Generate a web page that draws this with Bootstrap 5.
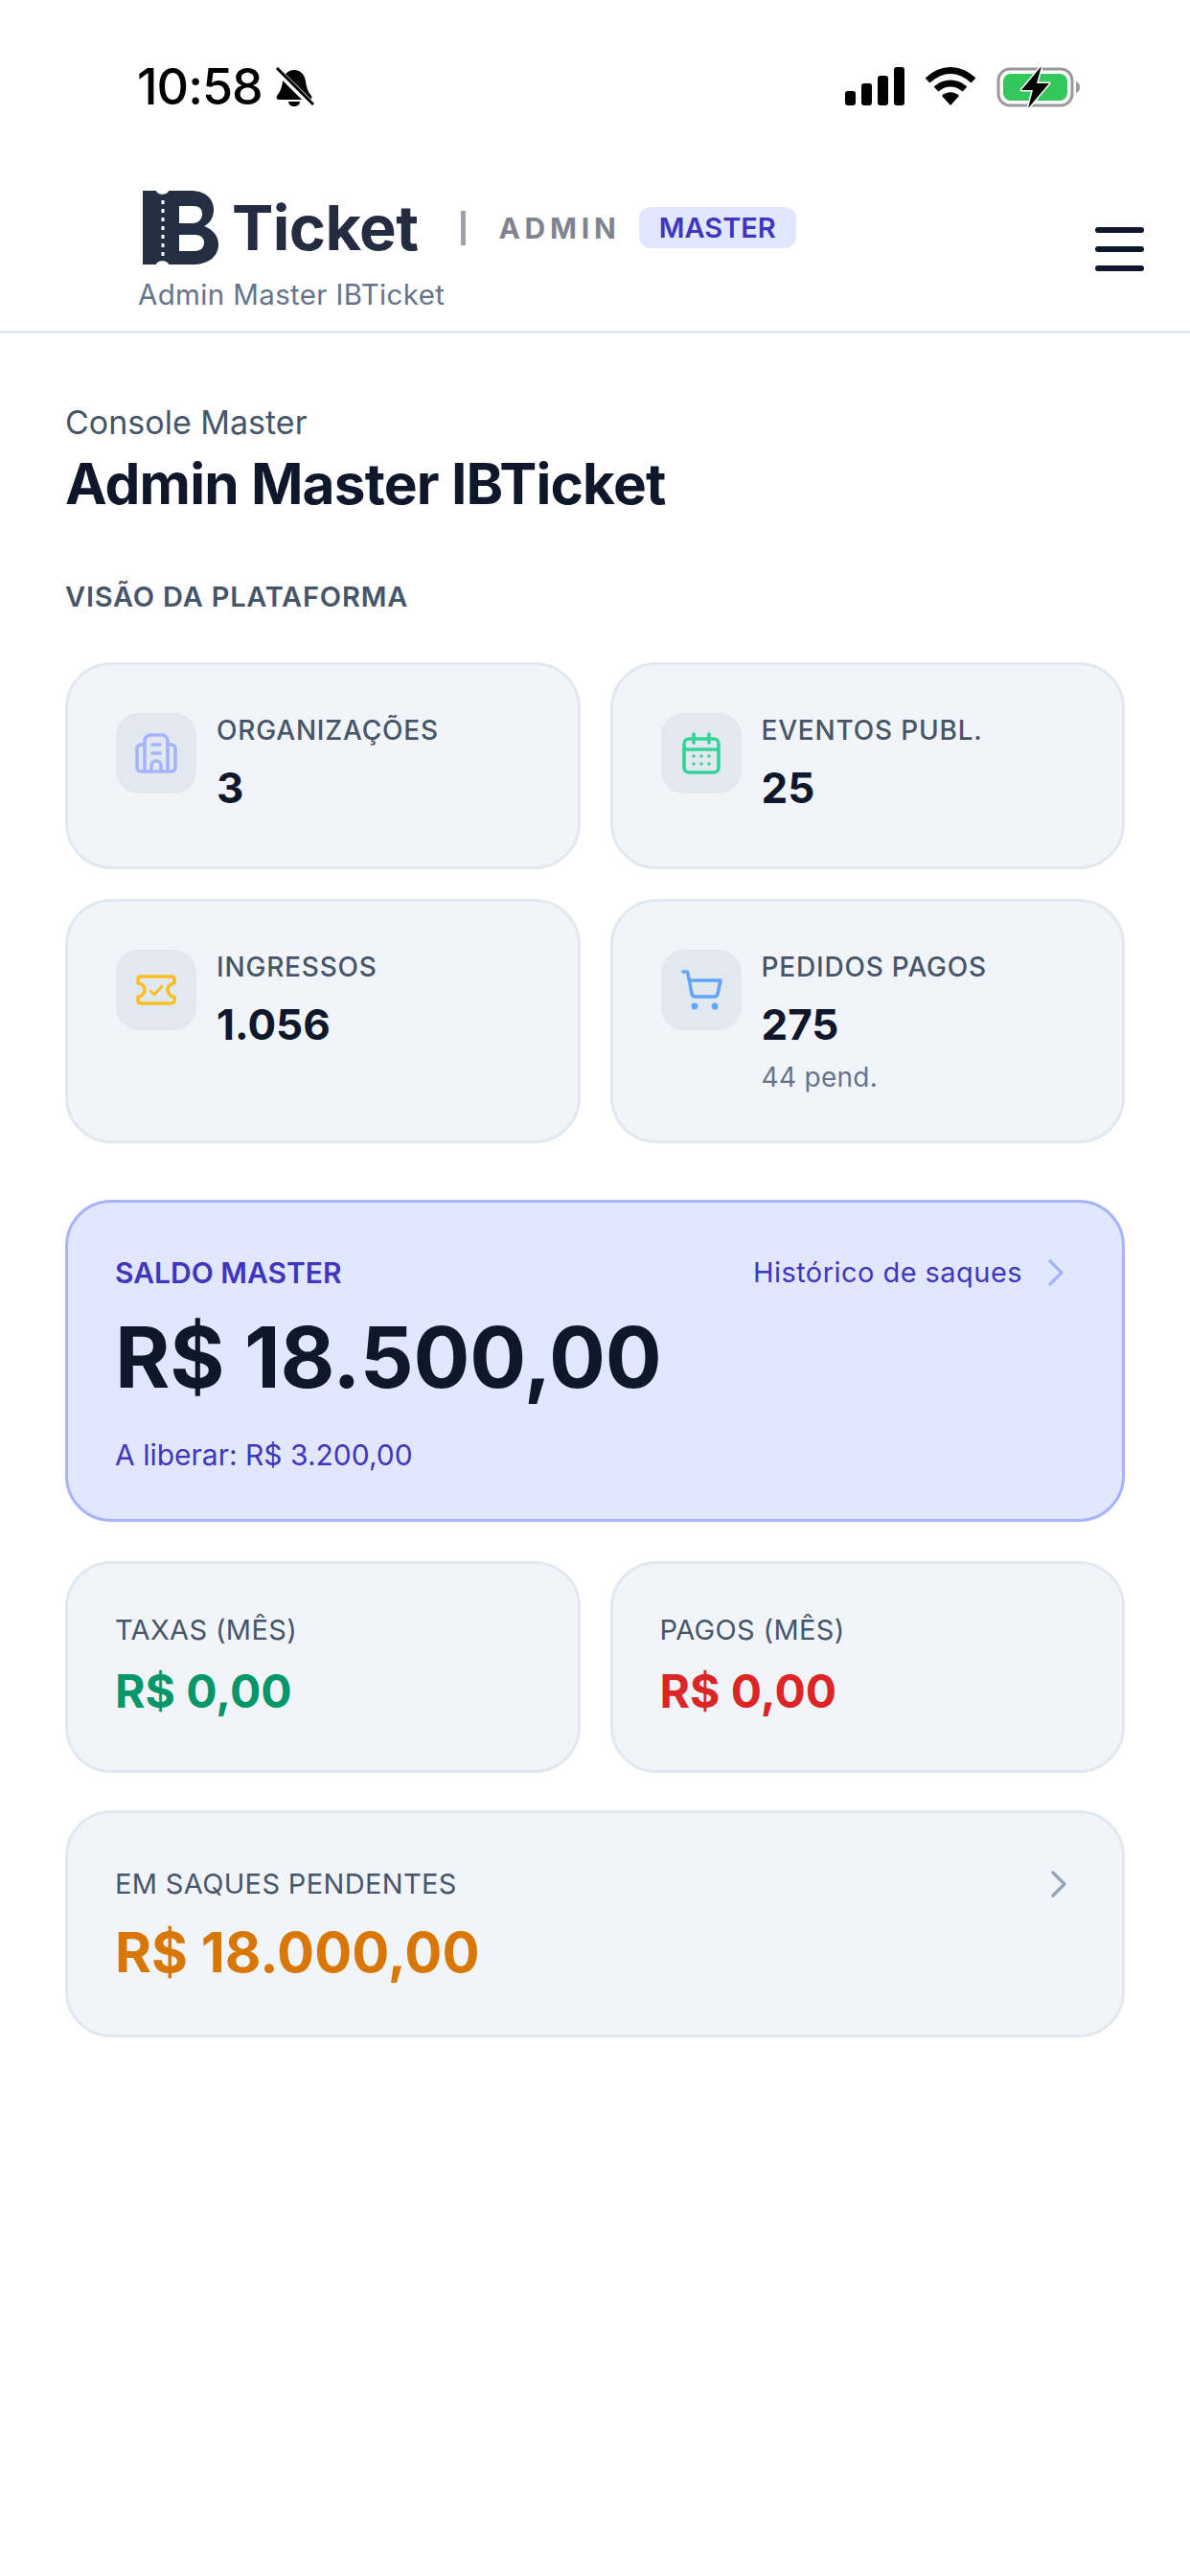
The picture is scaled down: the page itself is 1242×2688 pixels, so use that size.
<!DOCTYPE html>
<html lang="pt-BR">

<head>
  <meta charset="UTF-8">
  <title>Admin Master IBTicket</title>
  <link href="https://cdn.jsdelivr.net/npm/bootstrap@5.3.0/dist/css/bootstrap.min.css" rel="stylesheet">
  <style>
    body { font-family: Inter, "Liberation Sans", sans-serif; background: #fff; color: #0f172a; }
    svg { display: block; flex-shrink: 0; }

    /* status bar */
    .status-row { height: 160px; padding: 62px 114px 0 143px; align-items: flex-start; }
    .status-time { font-size: 52px; line-height: 58px; font-weight: 500; color: #000; letter-spacing: -1px; margin-right: 12px; }
    .status-icons { gap: 21px; }

    /* header */
    .app-header { height: 188px; border-bottom: 3px solid #e2e8f0; padding: 39px 48px 0 145px; }
    .brand-word { font-size: 65px; line-height: 77px; font-weight: 700; color: #232c40; letter-spacing: -.6px; margin-left: 14px; }
    .brand-sep { width: 5px; height: 36px; background: #9ca3af; margin: 0 34px 0 45px; }
    .brand-admin { font-size: 30px; line-height: 36px; font-weight: 700; color: #7f8590; letter-spacing: 4.8px; margin-right: 19px; }
    .brand-tag { font-size: 29px; line-height: 43px; font-weight: 600; color: #3f36bd; background: #e0e7ff; border-radius: 12px; padding: 0 21px; }
    .brand-sub { font-size: 29.5px; line-height: 36px; color: #64748b; letter-spacing: .35px; margin-top: 13px; margin-left: -1px; }
    .brand-logo { margin-left: 4px; }
    .menu-btn { width: 51px; margin-top: 38px; }
    .menu-btn span { display: block; height: 6px; border-radius: 3px; background: #0f172a; margin-bottom: 14px; }

    /* content */
    .page-main { padding: 71px 68px 0; }
    .page-kicker { font-size: 34px; line-height: 44px; color: #475569; }
    .page-title { font-size: 58.5px; line-height: 70px; font-weight: 700; color: #0f172a; letter-spacing: -.8px; margin: 7px 0 0; }
    .section-label { font-size: 29px; line-height: 36px; font-weight: 600; color: #475569; letter-spacing: .8px; margin: 65px 0 50px; }

    .tile-row { --bs-gutter-x: 31px; --bs-gutter-y: 31px; }
    .tile-row-next { padding-top: 10px; }
    .tile { background: #f1f5f9; border: 3px solid #e2e8f0; border-radius: 48px; }
    .tile-body { padding: 50px 40px 50px 50px; gap: 21px; }
    .tile-icon { width: 84px; height: 84px; border-radius: 24px; background: #e2e8f0; }
    .tile-label { font-size: 28px; line-height: 36px; font-weight: 500; color: #475569; letter-spacing: .8px; }
    .tile-value { font-size: 44px; line-height: 64px; font-weight: 700; color: #0f172a; margin-top: 10px; }
    .tile-note { font-size: 28px; line-height: 32px; color: #64748b; padding-top: 7px; letter-spacing: .3px; }

    .balance-tile { background: #e0e7ff; border: 3px solid #a5b4fc; border-radius: 48px; margin-top: 59px; padding: 51px 60px 50px 49px; height: 336px; color: #3f36bd; }
    .balance-label { font-size: 30px; line-height: 44px; font-weight: 600; }
    .balance-link { font-size: 29px; line-height: 44px; letter-spacing: .45px; gap: 26px; }
    .balance-value { font-size: 87.5px; line-height: 104px; font-weight: 700; color: #0f172a; letter-spacing: -.2px; margin-top: 14px; }
    .balance-note { font-size: 30px; line-height: 40px; margin-top: 30px; }

    .money-body { padding: 49px 49px 0; }
    .money-label { font-size: 29px; line-height: 40px; color: #475569; letter-spacing: .35px; }
    .money-value { font-size: 48px; line-height: 64px; font-weight: 700; margin-top: 12px; }
    .money-value-lg { font-size: 58px; line-height: 72px; font-weight: 700; color: #d97706; margin-top: 15px; }
    .money-green { color: #059669; }
    .money-red { color: #dc2626; }
    .money-tile { height: 221px; }
    .pending-tile { height: 237px; margin-top: 39px; padding-top: 54px; }
  </style>
</head>

<body>
  <div class="d-flex status-row">
    <span class="status-time">10:58</span>
    <svg width="42" height="42" viewBox="0 0 42 42" class="mt-2">
      <path d="M21 3c7 0 11 5 12 12 1 6 2 10 6 15 1 2 0 4-2 4H5c-2 0-3-2-2-4 4-5 5-9 6-15 1-7 5-12 12-12z" fill="#000"/>
      <path d="M15 36h12c0 3-3 5-6 5s-6-2-6-5z" fill="#000"/>
      <path d="M2 2l38 38" stroke="#fff" stroke-width="7"/>
      <path d="M3 1l38 38" stroke="#000" stroke-width="3"/>
    </svg>
    <div class="ms-auto d-flex align-items-start status-icons">
      <svg width="62" height="40" viewBox="0 0 62 40" class="mt-2">
        <rect x="0" y="25" width="11" height="15" rx="3"/>
        <rect x="17" y="17" width="11" height="23" rx="3"/>
        <rect x="34" y="9" width="11" height="31" rx="3"/>
        <rect x="51" y="0" width="11" height="40" rx="3"/>
      </svg>
      <svg width="54" height="40" viewBox="0 0 54 40" class="mt-2">
        <path d="M3 14C18 0 36 0 51 14" fill="none" stroke="#000" stroke-width="7"/>
        <path d="M12 23c9-8 21-8 30 0" fill="none" stroke="#000" stroke-width="7"/>
        <path d="M18 30c5-5 13-5 18 0l-9 10z" fill="#000"/>
      </svg>
      <svg width="88" height="42" viewBox="0 0 88 42" class="mt-2">
        <rect x="2" y="2" width="77" height="38" rx="12" fill="none" stroke="#9a9a9a" stroke-width="3"/>
        <rect x="7" y="7" width="67" height="28" rx="8" fill="#34c759"/>
        <path d="M83 15c3 1 4 3 4 6s-1 5-4 6z" fill="#9a9a9a"/>
        <path d="M47 -1L26 24h12l-5 19 22-26H42z" fill="#000" stroke="#fff" stroke-width="3" stroke-linejoin="round" paint-order="stroke"/>
      </svg>
    </div>
  </div>

  <header class="app-header d-flex justify-content-between align-items-start">
    <div>
      <div class="d-flex align-items-center">
        <svg class="brand-logo" width="79" height="77" viewBox="0 0 79 77">
          <path fill="#252f44" fill-rule="evenodd" d="M0 0H14C15 5 26 5 27 0H50C66 0 74 9 74 20C74 28 70 34 64 37C72 40 79 46 79 56C79 69 68 77 52 77H27C26 72 15 72 14 77H0ZM38 16V34H52C58 34 62 30 62 24C62 19 59 16 53 16ZM38 46V63H54C60 63 64 60 64 54C64 50 61 46 55 46Z"/>
          <path d="M21 10V68" stroke="#fff" stroke-width="3" stroke-dasharray="4 5"/>
        </svg>
        <span class="brand-word">Ticket</span>
        <span class="brand-sep"></span>
        <span class="brand-admin">ADMIN</span>
        <span class="brand-tag">MASTER</span>
      </div>
      <div class="brand-sub">Admin Master IBTicket</div>
    </div>
    <div class="menu-btn"><span></span><span></span><span></span></div>
  </header>

  <main class="page-main">
    <div class="page-kicker">Console Master</div>
    <h1 class="page-title">Admin Master IBTicket</h1>
    <div class="section-label">VISÃO DA PLATAFORMA</div>

    <div class="row tile-row">
      <div class="col-6">
        <div class="tile h-100">
          <div class="tile-body d-flex align-items-start">
            <div class="tile-icon d-flex align-items-center justify-content-center">
              <svg width="48" height="48" viewBox="0 0 48 48" fill="none" stroke="#a5b4fc" stroke-width="3.6" stroke-linecap="round" stroke-linejoin="round">
                <path d="M12 43V11a6 6 0 0 1 6-6h12a6 6 0 0 1 6 6v32"/>
                <path d="M12 15H8a4 4 0 0 0-4 4v20a4 4 0 0 0 4 4h32a4 4 0 0 0 4-4V19a4 4 0 0 0-4-4h-4"/>
                <path d="M19 43v-6a5 5 0 0 1 10 0v6"/>
                <path d="M20 15h8M20 24h8"/>
              </svg>
            </div>
            <div>
              <div class="tile-label">ORGANIZAÇÕES</div>
              <div class="tile-value">3</div>
            </div>
          </div>
        </div>
      </div>
      <div class="col-6">
        <div class="tile h-100">
          <div class="tile-body d-flex align-items-start">
            <div class="tile-icon d-flex align-items-center justify-content-center">
              <svg width="48" height="48" viewBox="0 0 48 48" fill="none" stroke="#34d399" stroke-width="3.6" stroke-linecap="round" stroke-linejoin="round">
                <rect x="6" y="9" width="36" height="35" rx="5"/>
                <path d="M6 20h36M16 4v9M32 4v9"/>
                <g fill="#34d399" stroke="none">
                  <circle cx="16" cy="27" r="1.7"/><circle cx="24" cy="27" r="1.7"/><circle cx="32" cy="27" r="1.7"/>
                  <circle cx="16" cy="35" r="1.7"/><circle cx="24" cy="35" r="1.7"/><circle cx="32" cy="35" r="1.7"/>
                </g>
              </svg>
            </div>
            <div>
              <div class="tile-label">EVENTOS PUBL.</div>
              <div class="tile-value">25</div>
            </div>
          </div>
        </div>
      </div>
      <div class="col-6">
        <div class="tile h-100">
          <div class="tile-body d-flex align-items-start">
            <div class="tile-icon d-flex align-items-center justify-content-center">
              <svg width="48" height="48" viewBox="0 0 48 48" fill="none" stroke="#fbbf24" stroke-width="3.6" stroke-linecap="round" stroke-linejoin="round">
                <path d="M8 10h32a3 3 0 0 1 3 3v4a7 7 0 0 0 0 14v4a3 3 0 0 1-3 3H8a3 3 0 0 1-3-3v-4a7 7 0 0 0 0-14v-4a3 3 0 0 1 3-3z"/>
                <path d="M18 25l4 4 8-9" stroke-width="2.8"/>
              </svg>
            </div>
            <div>
              <div class="tile-label">INGRESSOS</div>
              <div class="tile-value">1.056</div>
            </div>
          </div>
        </div>
      </div>
      <div class="col-6">
        <div class="tile h-100">
          <div class="tile-body d-flex align-items-start">
            <div class="tile-icon d-flex align-items-center justify-content-center">
              <svg width="48" height="48" viewBox="0 0 48 48" fill="none" stroke="#60a5fa" stroke-width="3.6" stroke-linecap="round" stroke-linejoin="round">
                <path d="M5 5h3a2 2 0 0 1 2 2l4 21a4 4 0 0 0 4 3h19a4 4 0 0 0 4-3l3-14H11"/>
                <circle cx="17" cy="41" r="3.4" fill="#60a5fa" stroke="none"/>
                <circle cx="38" cy="41" r="3.4" fill="#60a5fa" stroke="none"/>
              </svg>
            </div>
            <div>
              <div class="tile-label">PEDIDOS PAGOS</div>
              <div class="tile-value">275</div>
              <div class="tile-note">44 pend.</div>
            </div>
          </div>
        </div>
      </div>
    </div>

    <div class="balance-tile">
      <div class="d-flex justify-content-between align-items-center">
        <span class="balance-label">SALDO MASTER</span>
        <span class="balance-link d-flex align-items-center">Histórico de saques
          <svg width="18" height="28" viewBox="0 0 18 28" fill="none" stroke="#a5b4fc" stroke-width="3.2" stroke-linecap="round" stroke-linejoin="round"><path d="M3 2l12 12L3 26"/></svg>
        </span>
      </div>
      <div class="balance-value">R$ 18.500,00</div>
      <div class="balance-note">A liberar: R$ 3.200,00</div>
    </div>

    <div class="row tile-row tile-row-next mt-0">
      <div class="col-6">
        <div class="tile money-tile money-body">
          <div class="money-label">TAXAS (MÊS)</div>
          <div class="money-value money-green">R$ 0,00</div>
        </div>
      </div>
      <div class="col-6">
        <div class="tile money-tile money-body">
          <div class="money-label">PAGOS (MÊS)</div>
          <div class="money-value money-red">R$ 0,00</div>
        </div>
      </div>
    </div>

    <div class="tile pending-tile money-body">
      <div class="d-flex justify-content-between align-items-center pe-2">
        <span class="money-label">EM SAQUES PENDENTES</span>
        <svg width="18" height="28" viewBox="0 0 18 28" fill="none" stroke="#94a3b8" stroke-width="3.2" stroke-linecap="round" stroke-linejoin="round"><path d="M3 2l12 12L3 26"/></svg>
      </div>
      <div class="money-value-lg">R$ 18.000,00</div>
    </div>
  </main>

  <script src="https://cdn.jsdelivr.net/npm/bootstrap@5.3.0/dist/js/bootstrap.bundle.min.js"></script>
</body>
</html>
